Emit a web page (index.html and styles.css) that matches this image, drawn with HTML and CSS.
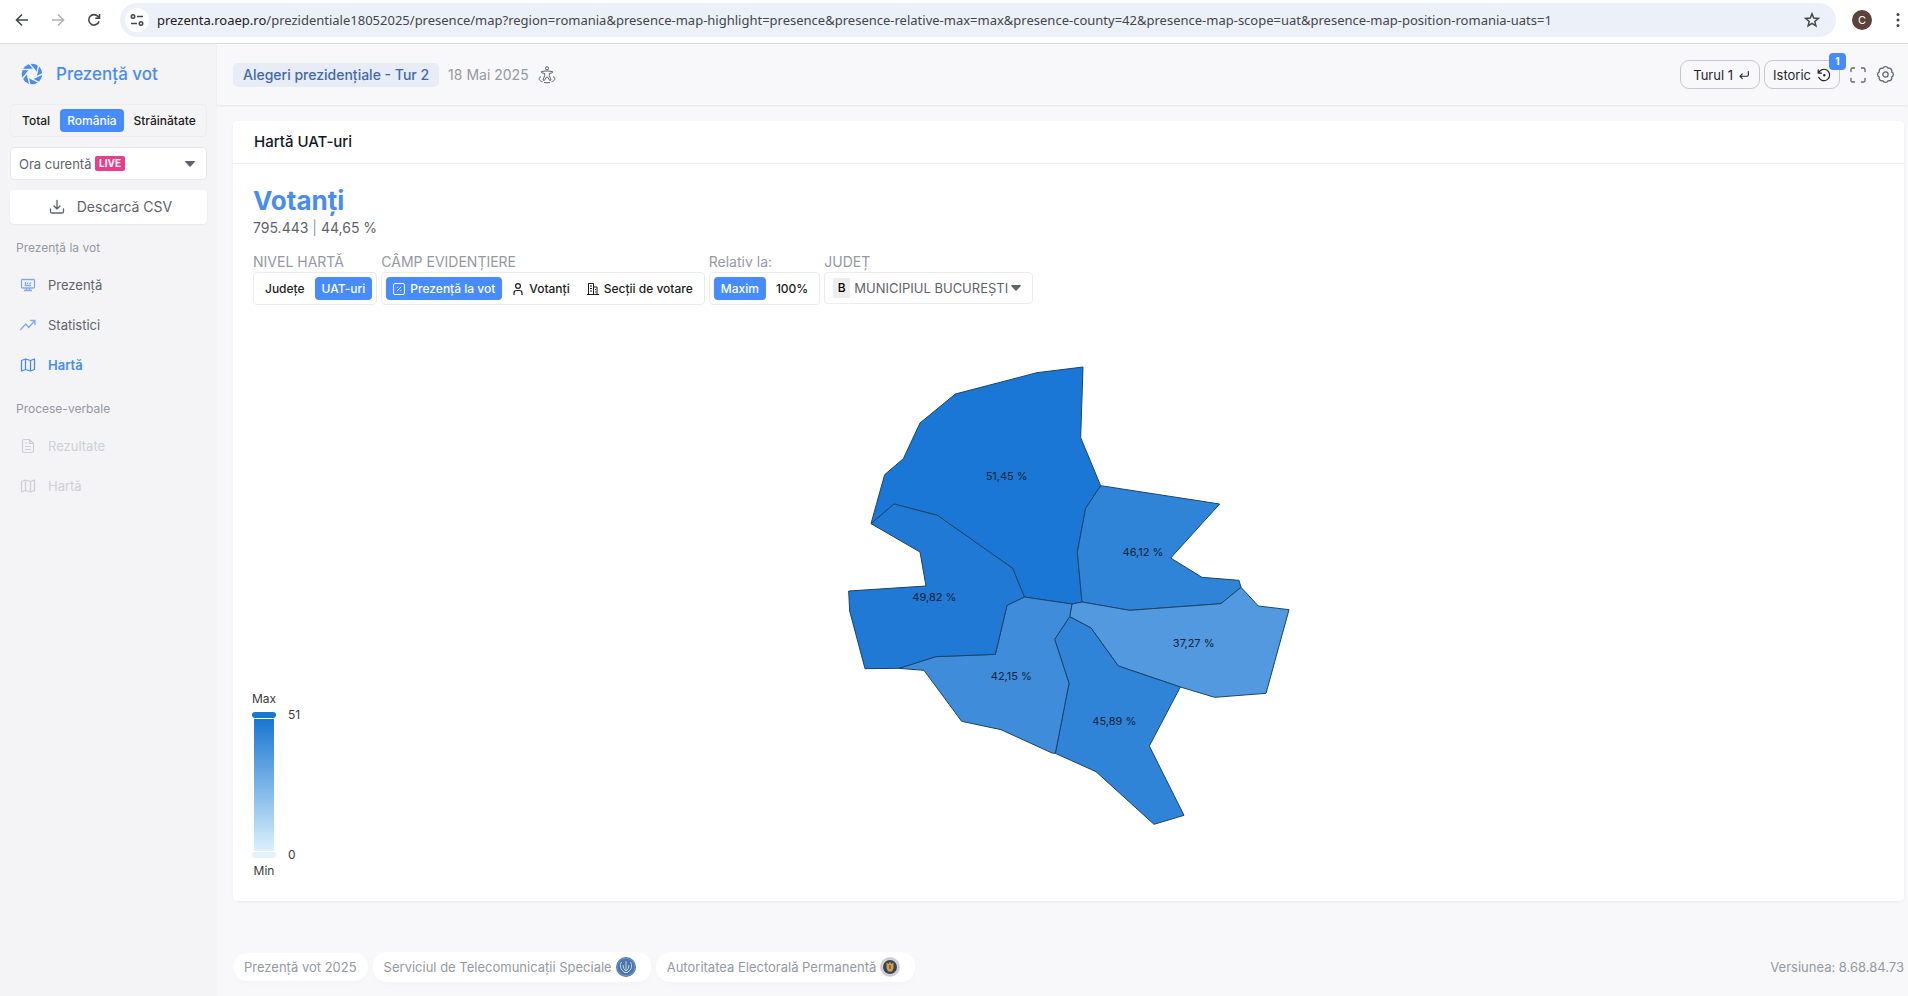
FILE: index.html
```html
<!DOCTYPE html>
<html lang="ro">
<head>
  <meta charset="UTF-8">
  <meta name="viewport" content="width=device-width, initial-scale=1">
  <title>Prezență vot</title>
  <link rel="stylesheet" href="styles.css">
</head>
<body>
  <!-- icons used more than once -->
  <svg class="sprite" aria-hidden="true">
    <symbol id="i-map" viewBox="0 0 16 16">
      <path d="M1.5 3.5 5.5 2l5 1.5 4-1.5v10.5l-4 1.5-5-1.5-4 1.5zM5.5 2v10.5M10.5 3.5V14" fill="none" stroke="currentColor" stroke-width="1.3" stroke-linejoin="round"/>
    </symbol>
    <symbol id="i-caret" viewBox="0 0 10 6">
      <path d="M.5 0h9q.7.3.2.9L5.6 5.5q-.6.6-1.2 0L.3.9Q-.2.3.5 0z" fill="currentColor"/>
    </symbol>
  </svg>

  <div class="browser">
    <button class="nav-btn" aria-label="Înapoi">
      <svg width="14" height="14" viewBox="0 0 14 14"><path d="M13 7H2M7 1.5 1.500 7 7 12.5" fill="none" stroke="currentColor" stroke-width="1.6"/></svg>
    </button>
    <button class="nav-btn off" aria-label="Înainte">
      <svg width="14" height="14" viewBox="0 0 14 14"><path d="M1 7h11M7 1.5 12.5 7 7 12.5" fill="none" stroke="currentColor" stroke-width="1.6"/></svg>
    </button>
    <button class="nav-btn" aria-label="Reîncarcă">
      <svg width="14" height="14" viewBox="0 0 14 14"><path d="M12 8.2A5.2 5.2 0 1 1 11 3.5L12.3 5M12.5 1v4.2H8.3" fill="none" stroke="currentColor" stroke-width="1.6"/></svg>
    </button>
    <div class="address">
      <span class="site-info">
        <svg width="14" height="14" viewBox="0 0 14 14" fill="none" stroke="currentColor" stroke-width="1.6"><circle cx="3" cy="3.5" r="1.7"/><path d="M7 3.5h6M1 10.5h6"/><circle cx="11" cy="10.5" r="1.7"/></svg>
      </span>
      <div class="url"><b>prezenta.roaep.ro</b>/prezidentiale18052025/presence/map?region=romania&amp;presence-map-highlight=presence&amp;presence-relative-max=max&amp;presence-county=42&amp;presence-map-scope=uat&amp;presence-map-position-romania-uats=1</div>
      <button class="star" aria-label="Marcaj">
        <svg width="16" height="16" viewBox="0 0 16 16"><path d="m8 1.8 1.7 4.3 4.6.3-3.5 3 1.1 4.5L8 11.4l-3.9 2.5 1.1-4.5-3.5-3 4.6-.3z" fill="none" stroke="currentColor" stroke-width="1.5"/></svg>
      </button>
    </div>
    <span class="profile">C</span>
    <button class="dots" aria-label="Meniu">
      <svg width="4" height="16" viewBox="0 0 4 16" fill="currentColor"><circle cx="2" cy="2.5" r="1.5"/><circle cx="2" cy="8" r="1.5"/><circle cx="2" cy="13.5" r="1.5"/></svg>
    </button>
  </div>

  <div class="app">
    <aside class="sidebar">
      <a class="brand" href="#">
        <svg width="22" height="22" viewBox="-11 -11 22 22">
          <circle r="10.3" fill="#478cf4"/>
          <circle r="4.6" fill="#f4f4f6"/>
          <g stroke="#f4f4f6" stroke-width="1.4">
            <path d="M2.5-4.500-11-4.5"/>
            <path d="M2.5-4.5-11-4.5" transform="rotate(51)"/>
            <path d="M2.5-4.5-11-4.5" transform="rotate(103)"/>
            <path d="M2.5-4.5-11-4.5" transform="rotate(154)"/>
            <path d="M2.5-4.5-11-4.5" transform="rotate(206)"/>
            <path d="M2.5-4.5-11-4.5" transform="rotate(257)"/>
            <path d="M2.5-4.5-11-4.5" transform="rotate(309)"/>
          </g>
        </svg>
        <span>Prezență vot</span>
      </a>

      <div class="segmented region">
        <button>Total</button>
        <button class="active">România</button>
        <button>Străinătate</button>
      </div>

      <div class="hour">
        <select aria-label="Ora">
          <option>Ora curentă</option>
        </select>
        <span class="live">LIVE</span>
        <svg class="caret" width="10" height="6"><use href="#i-caret"/></svg>
      </div>

      <button class="download">
        <svg width="16" height="16" viewBox="0 0 16 16" fill="none" stroke="currentColor" stroke-width="1.3" stroke-linecap="round" stroke-linejoin="round"><path d="M8 1.5V10M5 7l3 3 3-3M1.5 10v2.5Q1.5 14 3 14h10q1.5 0 1.5-1.5V10"/></svg>
        Descarcă CSV
      </button>

      <h3>Prezență la vot</h3>
      <nav>
        <a href="#">
          <svg width="16" height="16" viewBox="0 0 16 16" fill="none" stroke="currentColor" stroke-width="1.3"><rect x="1.5" y="2.5" width="13" height="8.5" rx="1"/><path d="M4 13.5h8M6.5 11v2.5M9.5 11v2.5M5.5 5v3.5H11M7.5 7V5.5M9.3 7 11 5.5"/></svg>
          Prezență
        </a>
        <a href="#">
          <svg width="16" height="16" viewBox="0 0 16 16" fill="none" stroke="currentColor" stroke-width="1.3" stroke-linecap="round"><path d="m.7 12.5 5-5.5 3 3.5 6.3-7M10.8 3.5H15v4"/></svg>
          Statistici
        </a>
        <a href="#" class="current">
          <svg width="16" height="16"><use href="#i-map"/></svg>
          Hartă
        </a>
      </nav>
      <h3>Procese-verbale</h3>
      <nav>
        <a href="#" class="disabled" aria-disabled="true">
          <svg width="16" height="16" viewBox="0 0 16 16" fill="none" stroke="currentColor" stroke-width="1.2"><path d="M9.5 1.5H4Q2.5 1.5 2.5 3v10q0 1.5 1.5 1.5h8q1.500 0 1.5-1.5V5.500zM9.5 1.5v4h4M5 5h2M5 8.5h6M5 11.5h6"/></svg>
          Rezultate
        </a>
        <a href="#" class="disabled" aria-disabled="true">
          <svg width="16" height="16"><use href="#i-map"/></svg>
          Hartă
        </a>
      </nav>
    </aside>

    <div class="content">
      <header class="topbar">
        <span class="tag">Alegeri prezidențiale - Tur 2</span>
        <span class="date">18 Mai 2025</span>
        <button class="icon-btn" aria-label="Accesibilitate">
          <svg width="18" height="18" viewBox="0 0 18 18" fill="none" stroke="currentColor" stroke-width="1" stroke-linejoin="round"><circle cx="9" cy="2.3" r="1.6"/><path d="M3.5 5.5 8 5h2l4.5.5v1.2l-3.2.8v2l1.7 4.5-1.3.5L9.500 11h-1l-2.200 3.5L5 14l1.7-4.5v-2l-3.2-.8zM3 10.500c-3.500 2-1.500 4.500 1.500 5.200M15 10.500c3.500 2 1.500 4.500-1.500 5.200M6 16.500q3 .6 6 0"/></svg>
        </button>
        <div class="actions">
          <button class="pill">Turul 1
            <svg width="10" height="10" viewBox="0 0 10 10" fill="none" stroke="currentColor" stroke-width="1.1" stroke-linecap="round"><path d="M9.3 1.5V5q0 1.2-1.2 1.2H1M3.3 3.8 1 6.2l2.3 2.4"/></svg>
          </button>
          <button class="pill istoric">Istoric
            <svg width="14" height="14" viewBox="0 0 14 14" fill="none" stroke="currentColor" stroke-width="1.2" stroke-linecap="round"><path d="M1.200 1.800v3.400h3.400M1.500 5.200A5.700 5.700 0 1 1 1.700 9.300"/><circle cx="7.300" cy="7.300" r=".6" fill="currentColor"/></svg>
            <span class="count">1</span>
          </button>
          <button class="icon-btn" aria-label="Ecran complet">
            <svg width="16" height="16" viewBox="0 0 16 16" fill="none" stroke="currentColor" stroke-width="1.3" stroke-linecap="round"><path d="M1 4.5v-2Q1 1 2.500 1h2M11.500 1h2Q15 1 15 2.500v2M15 11.500v2q0 1.500-1.500 1.500h-2M4.500 15h-2Q1 15 1 13.500v-2"/></svg>
          </button>
          <button class="icon-btn" aria-label="Setări">
            <svg width="17" height="17" viewBox="0 0 16 16" fill="none" stroke="currentColor" stroke-width="1.2" stroke-linejoin="round"><path d="M5.600 2.200A2.600 2.600 0 0 1 10.400 2.200 2.600 2.600 0 0 1 13.800 5.600 2.600 2.600 0 0 1 13.800 10.400 2.600 2.600 0 0 1 10.400 13.800 2.600 2.600 0 0 1 5.600 13.800 2.600 2.600 0 0 1 2.200 10.400 2.600 2.600 0 0 1 2.200 5.600 2.600 2.600 0 0 1 5.600 2.200z"/><circle cx="8" cy="8" r="2.500"/></svg>
          </button>
        </div>
      </header>

      <main>
        <section class="card">
          <h1>Hartă UAT-uri</h1>
          <div class="card-body">
            <h2>Votanți</h2>
            <p class="totals">795.443 <i>|</i> 44,65 %</p>

            <div class="filters">
              <div class="field">
                <span class="label">NIVEL HARTĂ</span>
                <div class="segmented">
                  <button>Județe</button>
                  <button class="active">UAT-uri</button>
                </div>
              </div>
              <div class="field">
                <span class="label">CÂMP EVIDENȚIERE</span>
                <div class="segmented">
                  <button class="active">
                    <svg width="12" height="12" viewBox="0 0 12 12" fill="none" stroke="currentColor"><rect x=".5" y=".5" width="11" height="11" rx="1.5"/><path d="m4 8 4-4M3.800 4.300h1M7.200 7.700h1"/></svg>
                    Prezență la vot
                  </button>
                  <button>
                    <svg width="12" height="12" viewBox="0 0 12 12" fill="none" stroke="currentColor" stroke-width="1.2"><circle cx="6" cy="3" r="2.4"/><path d="M2 12v-2q0-2.500 2.500-2.500h3Q10 7.500 10 10v2"/></svg>
                    Votanți
                  </button>
                  <button>
                    <svg width="12" height="12" viewBox="0 0 12 12" fill="none" stroke="currentColor"><path d="M0 11.500h12M1.500 11.500V.5h5v11M6.500 4H10v7.500M3 3h2M3 5.500h2M3 8h2M8 6.500h1M8 9h1"/></svg>
                    Secții de votare
                  </button>
                </div>
              </div>
              <div class="field">
                <span class="label">Relativ la:</span>
                <div class="segmented">
                  <button class="active">Maxim</button>
                  <button>100%</button>
                </div>
              </div>
              <div class="field">
                <label class="label" for="county">JUDEȚ</label>
                <div class="county">
                  <span class="code">B</span>
                  <select id="county">
                    <option>MUNICIPIUL BUCUREŞTI</option>
                  </select>
                  <svg class="caret" width="10" height="6"><use href="#i-caret"/></svg>
                </div>
              </div>
            </div>

            <div class="map">
              <svg class="sectors" viewBox="-4 0 1440 1470" role="img" aria-label="Sectoare București">
                <g stroke="#1b4468" stroke-width="3" stroke-linejoin="round">
                  <path fill="#1b77d5" d="M758 48 751 260 811 404 766 472 741 603 755 753 725 759 582 738 547 652 321 493 191 459 122 518 163 371 219 323 269 216 375 129 620 65z"/>
                  <path fill="#3084d8" d="M811 404 1168 459 1021 621 1115 679 1226 688 1232 709 1172 758 898 778 755 753 741 603 766 472z"/>
                  <path fill="#5299df" d="M755 753 898 778 1172 758 1232 709 1284 765 1376 776 1307 1027 1153 1039 1050 1008 864 945 782 831 718 797 725 759z"/>
                  <path fill="#3084d8" d="M718 797 782 831 864 945 1050 1008 957 1185 1061 1393 971 1420 797 1262 675 1207 716 997 673 865z"/>
                  <path fill="#3f8cdb" d="M582 738 725 759 718 797 673 865 716 997 675 1207 665 1206 512 1136 394 1111 281 958 206 952 316 917 495 910 530 763z"/>
                  <path fill="#1f79d5" d="M122 518 191 459 321 493 547 652 582 738 530 763 495 910 316 917 206 952 104 953 58 780 55 720 287 705 269 603z"/>
                </g>
                <g class="values">
                  <text x="529" y="387">51,45 %</text>
                  <text x="938" y="615">46,12 %</text>
                  <text x="1090" y="888">37,27 %</text>
                  <text x="852" y="1122">45,89 %</text>
                  <text x="543" y="987">42,15 %</text>
                  <text x="312" y="750">49,82 %</text>
                </g>
              </svg>
              <div class="legend">
                <span>Max</span>
                <div class="scale">
                  <div class="ramp">
                    <i class="thumb top"></i>
                    <i class="bar"></i>
                    <i class="thumb bottom"></i>
                  </div>
                  <div class="ticks"><span>51</span><span>0</span></div>
                </div>
                <span>Min</span>
              </div>
            </div>
          </div>
        </section>
      </main>

      <footer>
        <a href="#">Prezență vot 2025</a>
        <a href="#" class="org">Serviciul de Telecomunicații Speciale
          <svg width="20" height="20" viewBox="0 0 20 20"><circle cx="10" cy="10" r="10" fill="#4a76ad"/><circle cx="10" cy="10" r="8.8" fill="none" stroke="#7b9cc6" stroke-width=".8"/><path d="M5.500 5C3.500 8 4 13 8.500 15M14.500 5c2 3 1.500 8-3 10M10 4v9M7 8q0 4 3 6 3-2 3-6M8 15.500h4" fill="none" stroke="#c3d3e8"/></svg>
        </a>
        <a href="#" class="org">Autoritatea Electorală Permanentă
          <svg width="20" height="20" viewBox="0 0 20 20"><circle cx="10" cy="10" r="10" fill="#d4d6db"/><circle cx="10" cy="10" r="8.5" fill="none" stroke="#b4b8c0" stroke-dasharray="1 1"/><circle cx="10" cy="10" r="7" fill="#3b4254"/><path d="M6.500 5.500 8.500 7 10 4.500 11.500 7l2-1.500V11L12 14.500H8L6.500 11z" fill="#c9a24a"/><path d="M9 8h2v4H9z" fill="#a8643c"/></svg>
        </a>
        <span class="version">Versiunea: 8.68.84.73</span>
      </footer>
    </div>
  </div>
</body>
</html>
```
FILE: styles.css
```css
* {
  box-sizing: border-box;
}

body {
  margin: 0;
  min-height: 100vh;
  display: flex;
  flex-direction: column;
  font-family: Inter, "Liberation Sans", sans-serif;
  font-size: 14px;
  line-height: 20px;
  color: #5f636e;
  background: #f8f8fb;
}

button, select {
  font: inherit;
  color: inherit;
  background: none;
  border: none;
  padding: 0;
  margin: 0;
  cursor: pointer;
}

select {
  appearance: none;
  outline: none;
}

a {
  color: inherit;
  text-decoration: none;
}

svg {
  display: block;
  flex-shrink: 0;
}

.sprite {
  position: absolute;
  width: 0;
  height: 0;
}

/* browser toolbar */
.browser {
  display: flex;
  align-items: center;
  height: 44px;
  padding: 0 8px 4px 12px;
  background: #fff;
  border-bottom: 1px solid #dcdde0;
  color: #45474b;
}

.nav-btn {
  width: 20px;
  height: 20px;
  margin-right: 16px;
  display: flex;
  align-items: center;
  justify-content: center;
}

.nav-btn.off {
  color: #b0b1b4;
}

.address {
  flex: 1;
  min-width: 0;
  height: 34px;
  padding: 0 16px 0 5px;
  display: flex;
  align-items: center;
  gap: 8px;
  border-radius: 17px;
  background: #ecf0f9;
}

.site-info {
  width: 24px;
  height: 24px;
  border-radius: 50%;
  background: #fff;
  display: flex;
  align-items: center;
  justify-content: center;
}

.url {
  flex: 1;
  min-width: 0;
  overflow: hidden;
  white-space: nowrap;
  font-family: "Noto Sans", "Open Sans", sans-serif;
  font-size: 13px;
}

.url b {
  font-weight: normal;
  color: #1f2023;
}

.profile {
  width: 20px;
  height: 20px;
  margin: 0 24px 0 16px;
  border-radius: 50%;
  background: #5d4037;
  color: #fff;
  font-size: 11px;
  text-align: center;
}

/* layout */
.app {
  flex: 1;
  display: flex;
}

.sidebar {
  width: 217px;
  flex-shrink: 0;
  padding: 19px 10px;
  background: #f4f4f6;
}

.content {
  flex: 1;
  min-width: 0;
  display: flex;
  flex-direction: column;
}

/* sidebar */
.brand {
  display: flex;
  align-items: center;
  gap: 13px;
  height: 22px;
  padding-left: 11px;
  font-size: 17px;
  font-weight: 500;
  color: #478cf4;
}

.segmented {
  display: flex;
  gap: 3px;
  padding: 4px;
  border: 1px solid #ededf0;
  border-radius: 4px;
  font-size: 12px;
  font-weight: 500;
  color: #1c1d21;
}

.segmented button {
  display: flex;
  align-items: center;
  gap: 5px;
  height: 23px;
  padding: 0 7px;
  border-radius: 4px;
  white-space: nowrap;
}

.segmented .active {
  background: #478cff;
  color: #fff;
}

.region {
  margin-top: 19px;
  justify-content: space-between;
}

.hour {
  position: relative;
  display: flex;
  align-items: center;
  height: 33px;
  margin-top: 10px;
  background: #fff;
  border: 1px solid #e8e8eb;
  border-radius: 4px;
}

.hour select {
  width: 100%;
  height: 100%;
  padding-left: 8px;
  font-size: 13px;
}

.live {
  position: absolute;
  left: 84px;
  padding: 0 4px;
  border-radius: 2px;
  background: #e83e8c;
  color: #fff;
  font-size: 10px;
  font-weight: 700;
  line-height: 15px;
  pointer-events: none;
}

.hour .caret {
  position: absolute;
  right: 11px;
  pointer-events: none;
}

.download {
  width: 100%;
  height: 34px;
  margin-top: 10px;
  padding-left: 4px;
  display: flex;
  align-items: center;
  justify-content: center;
  gap: 12px;
  border-radius: 4px;
  background: #fff;
  box-shadow: 0 1px 2px rgba(0, 0, 0, 0.05);
}

.sidebar h3 {
  margin: 14px 0 7px 6px;
  font-size: 12px;
  font-weight: 400;
  color: #9699a1;
}

.sidebar nav a {
  display: flex;
  align-items: center;
  gap: 12px;
  height: 40px;
  padding-left: 10px;
  font-size: 13px;
}

.sidebar nav svg {
  color: #82aaeb;
}

.sidebar nav .current,
.sidebar nav .current svg {
  color: #478cf4;
}

.sidebar nav .current {
  font-weight: 600;
}

.sidebar nav .disabled,
.sidebar nav .disabled svg {
  color: #ced0d3;
}

/* top bar */
.topbar {
  display: flex;
  align-items: center;
  height: 61px;
  padding: 0 14px 0 16px;
  box-shadow: 0 1px 2px rgba(0, 0, 0, 0.08);
}

.tag {
  height: 24px;
  padding: 0 10px;
  border-radius: 5px;
  background: #e7ecf7;
  color: #4369a8;
  font-weight: 500;
  line-height: 24px;
}

.date {
  margin: 0 9px;
  color: #9699a1;
}

.actions {
  margin-left: auto;
  display: flex;
  align-items: center;
}

.pill {
  position: relative;
  display: flex;
  align-items: center;
  justify-content: center;
  gap: 6px;
  height: 29px;
  padding: 0 10px 0 12px;
  margin-right: 4px;
  border: 1px solid #c7c8cc;
  border-radius: 9px;
  font-size: 13px;
  color: #26272c;
}

.istoric {
  padding: 0 8px;
  margin-right: 10px;
}

.count {
  position: absolute;
  top: -8px;
  right: -7px;
  width: 17px;
  height: 17px;
  border-radius: 4px;
  background: #478cff;
  color: #fff;
  font-size: 10px;
  font-weight: 700;
  line-height: 16px;
}

.icon-btn + .icon-btn {
  margin-left: 11px;
}

/* card */
main {
  flex: 1;
  padding: 16px 4px 0 16px;
}

.card {
  background: #fff;
  border-radius: 4px;
  box-shadow: 0 1px 3px rgba(0, 0, 0, 0.06);
}

.card h1 {
  margin: 0;
  padding: 11px 21px;
  border-bottom: 1px solid #efeff1;
  font-size: 15px;
  font-weight: 500;
  color: #12182b;
}

.card-body {
  padding: 20px;
}

.card h2 {
  margin: 0;
  font-size: 26px;
  font-weight: 700;
  line-height: 34px;
  color: #478cf4;
}

.totals {
  margin: 0 0 14px;
}

.totals i {
  font-style: normal;
  color: #9699a1;
}

.filters {
  display: flex;
  gap: 4px;
}

.label {
  display: block;
  color: #9699a1;
}

.county {
  display: flex;
  align-items: center;
  height: 32px;
  padding: 0 11px 0 8px;
  border: 1px solid #ededf0;
  border-radius: 4px;
}

.county select {
  margin: 0 3px 0 4px;
  font-size: 13px;
}

.code {
  width: 17px;
  background: #ededed;
  border-radius: 2px;
  color: #000;
  font-size: 12px;
  font-weight: 500;
  text-align: center;
}

/* map */
.map {
  position: relative;
  padding: 46px 0 40px;
}

.sectors {
  width: 480px;
  max-width: 100%;
  margin: 0 auto;
}

.values text {
  font-size: 33px;
  text-anchor: middle;
  fill: #0f2338;
}

.legend {
  position: absolute;
  left: -1px;
  bottom: 0;
  font-size: 12px;
  color: #3b3c40;
}

.scale {
  display: flex;
  gap: 12px;
}

.ramp {
  width: 24px;
  margin: 3px 0;
  display: flex;
  flex-direction: column;
  align-items: center;
  gap: 1px;
}

.thumb {
  width: 24px;
  height: 6px;
  border-radius: 3px;
}

.top {
  background: #1976d2;
}

.bottom {
  background: #e3f2fd;
}

.bar {
  width: 20px;
  height: 132px;
  background: linear-gradient(#1976d2, #dcf0fc);
}

.ticks {
  display: flex;
  flex-direction: column;
  justify-content: space-between;
  margin: -4px 0;
}

.legend > span {
  display: block;
  width: 24px;
  text-align: center;
}

/* footer */
footer {
  display: flex;
  align-items: center;
  gap: 5px;
  padding: 14px 4px 14px 16px;
  font-size: 13px;
  color: #9699a1;
}

footer a {
  display: flex;
  align-items: center;
  gap: 4px;
  padding: 4px 11px;
  border-radius: 14px;
  background: #fff;
  box-shadow: 0 2px 6px rgba(0, 0, 0, 0.02);
}

footer .org {
  padding: 5px 15px 5px 11px;
}

.version {
  margin-left: auto;
}
```
